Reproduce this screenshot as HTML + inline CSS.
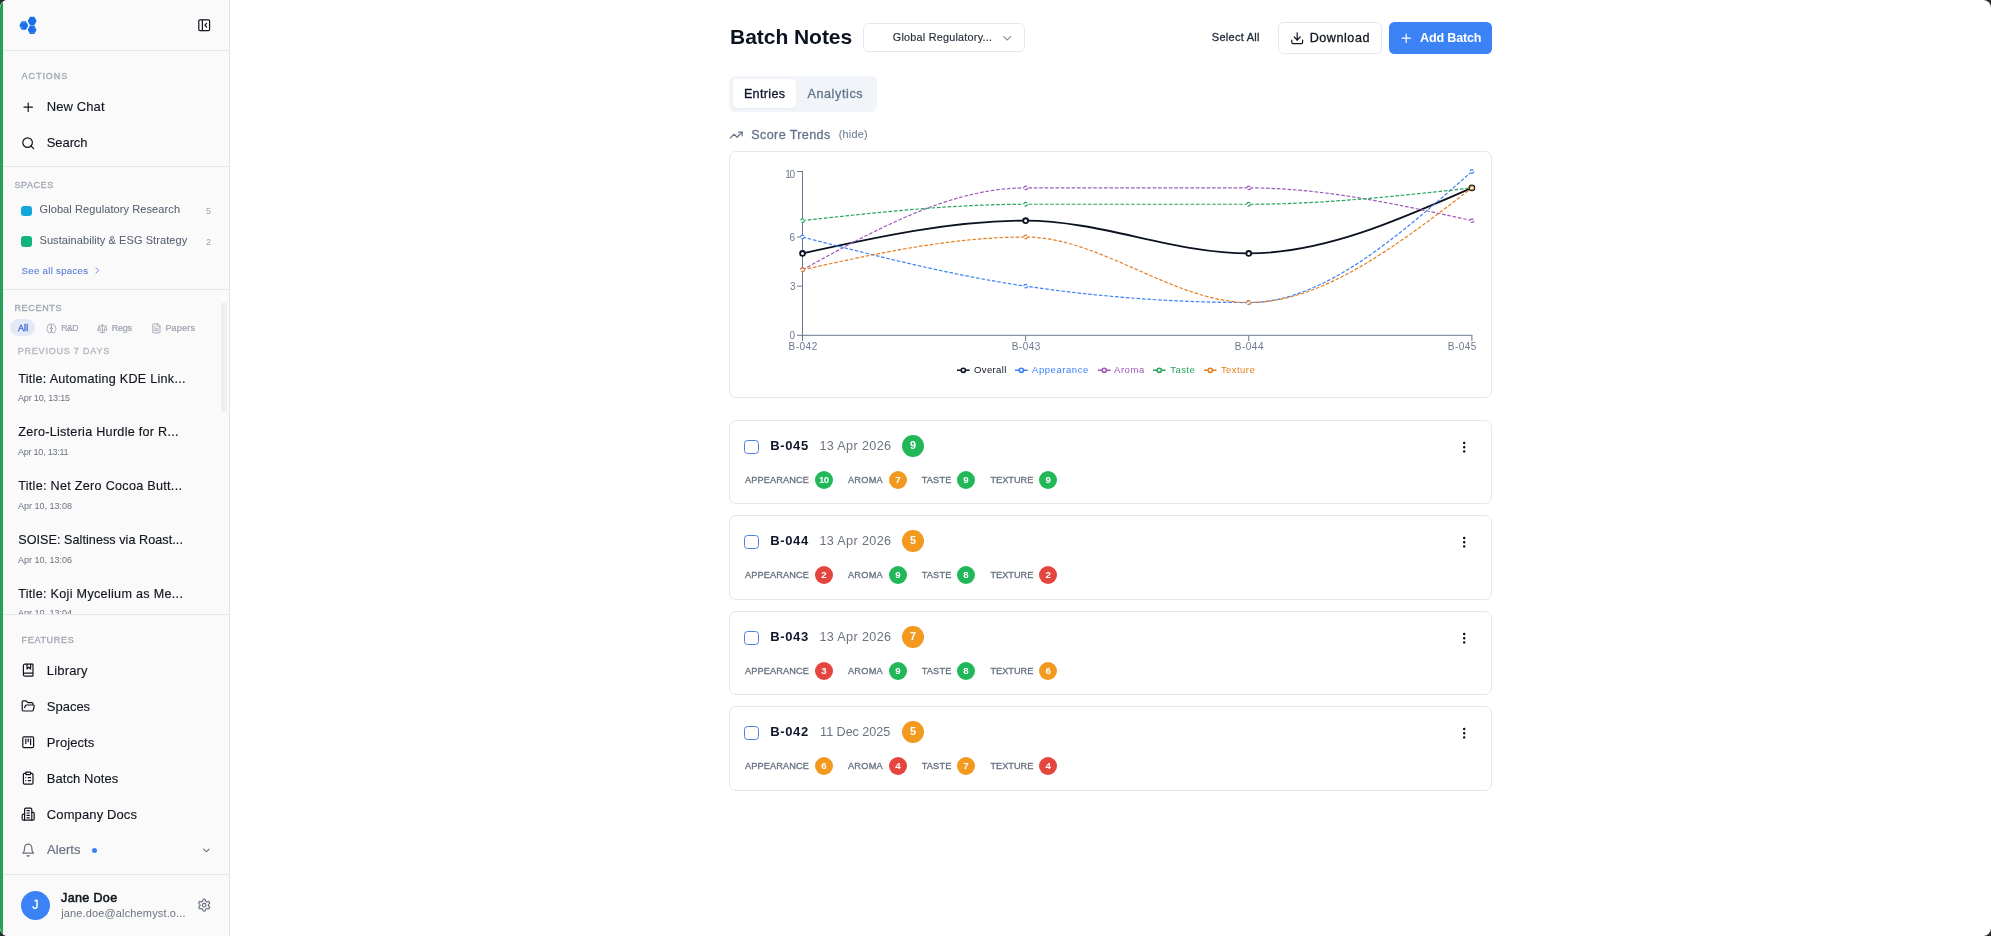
<!DOCTYPE html>
<html><head><meta charset="utf-8"><title>Batch Notes</title>
<style>
html,body{margin:0;padding:0;}
body{width:1991px;height:936px;overflow:hidden;background:#2b2b2b;font-family:"Liberation Sans",sans-serif;position:relative;}
#app{position:absolute;left:0;top:0;width:1991px;height:936px;background:#fff;border-radius:8px;overflow:hidden;will-change:transform;}
.t{position:absolute;white-space:nowrap;line-height:1;}
svg{display:block;overflow:visible;}
</style></head><body><div id="app">
<div style="position:absolute;left:0px;top:0px;width:229px;height:936px;background:#fafafa;"></div>
<div style="position:absolute;left:229px;top:0px;width:1px;height:936px;background:#e4e4e7;"></div>
<div style="position:absolute;left:0px;top:0px;width:3px;height:936px;background:#25a054;"></div>
<div style="position:absolute;left:3px;top:50px;width:226px;height:1px;background:#e5e7eb;"></div>
<div style="position:absolute;left:3px;top:166px;width:226px;height:1px;background:#e5e7eb;"></div>
<div style="position:absolute;left:3px;top:289px;width:226px;height:1px;background:#e5e7eb;"></div>
<div style="position:absolute;left:3px;top:614px;width:226px;height:1px;background:#e5e7eb;"></div>
<div style="position:absolute;left:3px;top:874px;width:226px;height:1px;background:#e5e7eb;"></div>
<svg style="position:absolute;left:0;top:0" width="60" height="50" viewBox="0 0 60 50">
<g fill="#1b6fe6" stroke="#1b6fe6" stroke-width="1.3" stroke-linejoin="round">
<polygon points="28.40,21.00 30.27,17.50 34.02,17.50 35.90,21.00 34.02,24.50 30.27,24.50"/>
<polygon points="28.40,29.75 30.27,26.25 34.02,26.25 35.90,29.75 34.02,33.25 30.27,33.25"/>
<polygon points="20.05,25.50 21.93,22.00 25.68,22.00 27.55,25.50 25.68,29.00 21.93,29.00"/>
</g>
<g stroke="#5fa2f5" stroke-width="0.7" stroke-linecap="round" fill="none">
<path d="M22.6 22.7h2.4"/><path d="M21.2 26.2l1.6 2"/>
<path d="M33.6 27.2l1.5 2.2"/><path d="M31 32.3h2.4"/>
</g></svg>
<svg style="position:absolute;left:196.9px;top:17.85px;" width="14.4" height="14.4" viewBox="0 0 24 24" fill="none" stroke="#10151f" stroke-width="2" stroke-linecap="round" stroke-linejoin="round"><rect width="18" height="18" x="3" y="3" rx="2"/><path d="M9 3v18"/><path d="m16 15-3-3 3-3"/></svg>
<div class="t" style="left:21.50px;top:72.00px;font-size:9px;color:#a3aab5;letter-spacing:0.966px;-webkit-text-stroke:0.35px #a3aab5;">ACTIONS</div>
<svg style="position:absolute;left:20.900000000000002px;top:99.8px;" width="14.4" height="14.4" viewBox="0 0 24 24" fill="none" stroke="#10151f" stroke-width="2" stroke-linecap="round" stroke-linejoin="round"><path d="M5 12h14"/><path d="M12 5v14"/></svg>
<div class="t" style="left:46.80px;top:100.00px;font-size:13px;color:#10151f;letter-spacing:0.088px;-webkit-text-stroke:0.12px #10151f;">New Chat</div>
<svg style="position:absolute;left:21.1px;top:135.9px;" width="14.4" height="14.4" viewBox="0 0 24 24" fill="none" stroke="#10151f" stroke-width="2" stroke-linecap="round" stroke-linejoin="round"><circle cx="11" cy="11" r="8"/><path d="m21 21-4.3-4.3"/></svg>
<div class="t" style="left:46.80px;top:136.00px;font-size:13px;color:#10151f;letter-spacing:-0.097px;-webkit-text-stroke:0.12px #10151f;">Search</div>
<div class="t" style="left:14.40px;top:181.00px;font-size:9px;color:#a3aab5;letter-spacing:0.591px;-webkit-text-stroke:0.35px #a3aab5;">SPACES</div>
<div style="position:absolute;left:21px;top:205.5px;width:10.5px;height:10.5px;background:#11a8d9;border-radius:3px;"></div>
<div class="t" style="left:39.50px;top:204.00px;font-size:11px;color:#566070;letter-spacing:0.093px;-webkit-text-stroke:0.05px #566070;">Global Regulatory Research</div>
<div class="t" style="left:206.00px;top:207.00px;font-size:9px;color:#9ca3af;">5</div>
<div style="position:absolute;left:21px;top:236.3px;width:10.5px;height:10.5px;background:#12b37d;border-radius:3px;"></div>
<div class="t" style="left:39.50px;top:235.00px;font-size:11px;color:#566070;letter-spacing:0.078px;-webkit-text-stroke:0.05px #566070;">Sustainability &amp; ESG Strategy</div>
<div class="t" style="left:206.00px;top:238.00px;font-size:9px;color:#9ca3af;">2</div>
<div class="t" style="left:21.50px;top:266.00px;font-size:9.7px;color:#5b7fd6;letter-spacing:0.278px;-webkit-text-stroke:0.1px #5b7fd6;">See all spaces</div>
<svg style="position:absolute;left:91.8px;top:265.20000000000005px;" width="10.8" height="10.8" viewBox="0 0 24 24" fill="none" stroke="#5b7fd6" stroke-width="2" stroke-linecap="round" stroke-linejoin="round"><path d="m9 18 6-6-6-6"/></svg>
<div class="t" style="left:14.40px;top:304.00px;font-size:9px;color:#a3aab5;letter-spacing:0.683px;-webkit-text-stroke:0.35px #a3aab5;">RECENTS</div>
<div style="position:absolute;left:10.3px;top:319.2px;width:24.6px;height:17.2px;background:#e4e9f8;border-radius:9px;"></div>
<div class="t" style="left:18.00px;top:324.00px;font-size:9px;color:#3f5fd6;letter-spacing:0.100px;-webkit-text-stroke:0.3px #3f5fd6;">All</div>
<svg style="position:absolute;left:45.800000000000004px;top:322.70000000000005px;" width="10.8" height="10.8" viewBox="0 0 24 24" fill="none" stroke="#9ca3af" stroke-width="2" stroke-linecap="round" stroke-linejoin="round"><path d="M12 5a3 3 0 1 0-5.997.125 4 4 0 0 0-2.526 5.77 4 4 0 0 0 .556 6.588A4 4 0 1 0 12 18Z"/><path d="M12 5a3 3 0 1 1 5.997.125 4 4 0 0 1 2.526 5.77 4 4 0 0 1-.556 6.588A4 4 0 1 1 12 18Z"/><path d="M15 13a4.5 4.5 0 0 1-3-4 4.5 4.5 0 0 1-3 4"/></svg>
<div class="t" style="left:61.30px;top:324.00px;font-size:8.6px;color:#9ca3af;letter-spacing:-0.477px;-webkit-text-stroke:0.2px #9ca3af;">R&amp;D</div>
<svg style="position:absolute;left:96.8px;top:322.70000000000005px;" width="10.8" height="10.8" viewBox="0 0 24 24" fill="none" stroke="#9ca3af" stroke-width="2" stroke-linecap="round" stroke-linejoin="round"><path d="m16 16 3-8 3 8c-.87.65-1.92 1-3 1s-2.13-.35-3-1Z"/><path d="m2 16 3-8 3 8c-.87.65-1.92 1-3 1s-2.13-.35-3-1Z"/><path d="M7 21h10"/><path d="M12 3v18"/><path d="M3 7h2c2 0 5-1 7-2 2 1 5 2 7 2h2"/></svg>
<div class="t" style="left:111.80px;top:324.00px;font-size:9px;color:#9ca3af;letter-spacing:-0.269px;-webkit-text-stroke:0.2px #9ca3af;">Regs</div>
<svg style="position:absolute;left:150.75px;top:322.70000000000005px;" width="10.8" height="10.8" viewBox="0 0 24 24" fill="none" stroke="#9ca3af" stroke-width="2" stroke-linecap="round" stroke-linejoin="round"><path d="M15 2H6a2 2 0 0 0-2 2v16a2 2 0 0 0 2 2h12a2 2 0 0 0 2-2V7Z"/><path d="M14 2v4a2 2 0 0 0 2 2h4"/><path d="M10 9H8"/><path d="M16 13H8"/><path d="M16 17H8"/></svg>
<div class="t" style="left:165.40px;top:324.00px;font-size:9px;color:#9ca3af;letter-spacing:0.198px;-webkit-text-stroke:0.2px #9ca3af;">Papers</div>
<div class="t" style="left:17.70px;top:347.00px;font-size:9px;color:#b3b8c0;letter-spacing:0.796px;-webkit-text-stroke:0.35px #b3b8c0;">PREVIOUS 7 DAYS</div>
<div style="position:absolute;left:3px;top:296px;width:226px;height:318px;overflow:hidden;"><div style="position:absolute;left:-3px;top:-296px;">
<div class="t" style="left:18.20px;top:373.00px;font-size:12.6px;color:#10151f;letter-spacing:0.264px;-webkit-text-stroke:0.15px #10151f;">Title: Automating KDE Link...</div>
<div class="t" style="left:18.00px;top:394.00px;font-size:9px;color:#6b7280;letter-spacing:-0.161px;">Apr 10, 13:15</div>
<div class="t" style="left:18.20px;top:426.00px;font-size:12.6px;color:#10151f;letter-spacing:0.277px;-webkit-text-stroke:0.15px #10151f;">Zero-Listeria Hurdle for R...</div>
<div class="t" style="left:18.00px;top:448.00px;font-size:9px;color:#6b7280;letter-spacing:-0.231px;">Apr 10, 13:11</div>
<div class="t" style="left:18.20px;top:480.00px;font-size:12.6px;color:#10151f;letter-spacing:0.290px;-webkit-text-stroke:0.15px #10151f;">Title: Net Zero Cocoa Butt...</div>
<div class="t" style="left:18.00px;top:502.00px;font-size:9px;color:#6b7280;letter-spacing:-0.003px;">Apr 10, 13:08</div>
<div class="t" style="left:18.20px;top:534.00px;font-size:12.6px;color:#10151f;letter-spacing:0.058px;-webkit-text-stroke:0.15px #10151f;">SOISE: Saltiness via Roast...</div>
<div class="t" style="left:18.00px;top:556.00px;font-size:9px;color:#6b7280;letter-spacing:0.005px;">Apr 10, 13:06</div>
<div class="t" style="left:18.20px;top:588.00px;font-size:12.6px;color:#10151f;letter-spacing:0.301px;-webkit-text-stroke:0.15px #10151f;">Title: Koji Mycelium as Me...</div>
<div class="t" style="left:18.00px;top:609.00px;font-size:9px;color:#6b7280;letter-spacing:0.005px;">Apr 10, 13:04</div>
</div></div>
<div style="position:absolute;left:221px;top:303px;width:6px;height:108.5px;background:#eeeff2;"></div>
<div class="t" style="left:21.50px;top:636.00px;font-size:9px;color:#a3aab5;letter-spacing:0.694px;-webkit-text-stroke:0.35px #a3aab5;">FEATURES</div>
<svg style="position:absolute;left:20.900000000000002px;top:662.9px;" width="14.4" height="14.4" viewBox="0 0 24 24" fill="none" stroke="#10151f" stroke-width="2" stroke-linecap="round" stroke-linejoin="round"><path d="M10 2v8l3-3 3 3V2"/><path d="M4 19.5v-15A2.5 2.5 0 0 1 6.5 2H19a1 1 0 0 1 1 1v18a1 1 0 0 1-1 1H6.5a1 1 0 0 1 0-5H20"/></svg>
<div class="t" style="left:46.80px;top:664.00px;font-size:13px;color:#10151f;letter-spacing:0.176px;-webkit-text-stroke:0.12px #10151f;">Library</div>
<svg style="position:absolute;left:20.900000000000002px;top:698.9px;" width="14.4" height="14.4" viewBox="0 0 24 24" fill="none" stroke="#10151f" stroke-width="2" stroke-linecap="round" stroke-linejoin="round"><path d="m6 14 1.5-2.9A2 2 0 0 1 9.24 10H20a2 2 0 0 1 1.94 2.5l-1.54 6a2 2 0 0 1-1.95 1.5H4a2 2 0 0 1-2-2V5a2 2 0 0 1 2-2h3.9a2 2 0 0 1 1.69.9l.81 1.2a2 2 0 0 0 1.67.9H18a2 2 0 0 1 2 2v2"/></svg>
<div class="t" style="left:46.80px;top:700.00px;font-size:13px;color:#10151f;letter-spacing:-0.011px;-webkit-text-stroke:0.12px #10151f;">Spaces</div>
<svg style="position:absolute;left:20.900000000000002px;top:734.9px;" width="14.4" height="14.4" viewBox="0 0 24 24" fill="none" stroke="#10151f" stroke-width="2" stroke-linecap="round" stroke-linejoin="round"><rect width="18" height="18" x="3" y="3" rx="2"/><path d="M8 7v7"/><path d="M12 7v4"/><path d="M16 7v9"/></svg>
<div class="t" style="left:46.80px;top:736.00px;font-size:13px;color:#10151f;letter-spacing:0.063px;-webkit-text-stroke:0.12px #10151f;">Projects</div>
<svg style="position:absolute;left:20.900000000000002px;top:770.9px;" width="14.4" height="14.4" viewBox="0 0 24 24" fill="none" stroke="#10151f" stroke-width="2" stroke-linecap="round" stroke-linejoin="round"><rect width="8" height="4" x="8" y="2" rx="1" ry="1"/><path d="M16 4h2a2 2 0 0 1 2 2v14a2 2 0 0 1-2 2H6a2 2 0 0 1-2-2V6a2 2 0 0 1 2-2h2"/><path d="M12 11h4"/><path d="M12 16h4"/><path d="M8 11h.01"/><path d="M8 16h.01"/></svg>
<div class="t" style="left:46.80px;top:772.00px;font-size:13px;color:#10151f;letter-spacing:0.059px;-webkit-text-stroke:0.12px #10151f;">Batch Notes</div>
<svg style="position:absolute;left:20.900000000000002px;top:806.9px;" width="14.4" height="14.4" viewBox="0 0 24 24" fill="none" stroke="#10151f" stroke-width="2" stroke-linecap="round" stroke-linejoin="round"><path d="M6 22V4a2 2 0 0 1 2-2h8a2 2 0 0 1 2 2v18Z"/><path d="M6 12H4a2 2 0 0 0-2 2v6a2 2 0 0 0 2 2h2"/><path d="M18 9h2a2 2 0 0 1 2 2v9a2 2 0 0 1-2 2h-2"/><path d="M10 6h4"/><path d="M10 10h4"/><path d="M10 14h4"/><path d="M10 18h4"/></svg>
<div class="t" style="left:46.80px;top:808.00px;font-size:13px;color:#10151f;letter-spacing:0.121px;-webkit-text-stroke:0.12px #10151f;">Company Docs</div>
<svg style="position:absolute;left:20.85px;top:843.15px;" width="14.4" height="14.4" viewBox="0 0 24 24" fill="none" stroke="#6b7280" stroke-width="2" stroke-linecap="round" stroke-linejoin="round"><path d="M6 8a6 6 0 0 1 12 0c0 7 3 9 3 9H3s3-2 3-9"/><path d="M10.3 21a1.94 1.94 0 0 0 3.4 0"/></svg>
<div class="t" style="left:47.00px;top:843.00px;font-size:13px;color:#6b7280;letter-spacing:0.054px;-webkit-text-stroke:0.2px #6b7280;">Alerts</div>
<div style="position:absolute;left:91.8px;top:847.9px;width:5.2px;height:5.2px;background:#3b82f6;border-radius:50%;"></div>
<svg style="position:absolute;left:201.2px;top:844.9px;" width="10.8" height="10.8" viewBox="0 0 24 24" fill="none" stroke="#5d6572" stroke-width="2.3" stroke-linecap="round" stroke-linejoin="round"><path d="m6 9 6 6 6-6"/></svg>
<div style="position:absolute;left:21px;top:891px;width:29px;height:29px;background:#3b82f6;border-radius:50%;"></div>
<div class="t" style="left:32.35px;top:899.00px;font-size:12.6px;color:#fff;-webkit-text-stroke:0.3px #fff;">J</div>
<div class="t" style="left:61.10px;top:892.00px;font-size:12.6px;color:#10151f;letter-spacing:0.308px;-webkit-text-stroke:0.55px #10151f;">Jane Doe</div>
<div class="t" style="left:61.17px;top:908.00px;font-size:11px;color:#6b7280;letter-spacing:0.145px;">jane.doe@alchemyst.o...</div>
<svg style="position:absolute;left:196.95000000000002px;top:898.05px;" width="14.4" height="14.4" viewBox="0 0 24 24" fill="none" stroke="#6b7280" stroke-width="2" stroke-linecap="round" stroke-linejoin="round"><path d="M12.22 2h-.44a2 2 0 0 0-2 2v.18a2 2 0 0 1-1 1.73l-.43.25a2 2 0 0 1-2 0l-.15-.08a2 2 0 0 0-2.73.73l-.22.38a2 2 0 0 0 .73 2.73l.15.1a2 2 0 0 1 1 1.72v.51a2 2 0 0 1-1 1.74l-.15.09a2 2 0 0 0-.73 2.73l.22.38a2 2 0 0 0 2.73.73l.15-.08a2 2 0 0 1 2 0l.43.25a2 2 0 0 1 1 1.73V20a2 2 0 0 0 2 2h.44a2 2 0 0 0 2-2v-.18a2 2 0 0 1 1-1.73l.43-.25a2 2 0 0 1 2 0l.15.08a2 2 0 0 0 2.73-.73l.22-.39a2 2 0 0 0-.73-2.73l-.15-.08a2 2 0 0 1-1-1.74v-.5a2 2 0 0 1 1-1.74l.15-.09a2 2 0 0 0 .73-2.73l-.22-.38a2 2 0 0 0-2.73-.73l-.15.08a2 2 0 0 1-2 0l-.43-.25a2 2 0 0 1-1-1.73V4a2 2 0 0 0-2-2z"/><circle cx="12" cy="12" r="3"/></svg>
<div class="t" style="left:730.00px;top:26.00px;font-size:21px;color:#0b1220;letter-spacing:-0.033px;font-weight:700;">Batch Notes</div>
<div style="position:absolute;left:863px;top:23px;width:162px;height:29px;box-sizing:border-box;border:1px solid #e2e8f0;border-radius:6px;background:#fff;"></div>
<div class="t" style="left:892.80px;top:32.00px;font-size:10.8px;color:#1f2937;letter-spacing:0.239px;-webkit-text-stroke:0.15px #1f2937;">Global Regulatory...</div>
<svg style="position:absolute;left:1000.1999999999999px;top:30.900000000000002px;" width="14.4" height="14.4" viewBox="0 0 24 24" fill="none" stroke="#8a909c" stroke-width="1.8" stroke-linecap="round" stroke-linejoin="round"><path d="m6 9 6 6 6-6"/></svg>
<div class="t" style="left:1211.80px;top:32.00px;font-size:11px;color:#1f2937;letter-spacing:0.273px;-webkit-text-stroke:0.3px #1f2937;">Select All</div>
<div style="position:absolute;left:1278px;top:22px;width:104px;height:32px;box-sizing:border-box;border:1px solid #e5e7eb;border-radius:5.4px;background:#fff;"></div>
<svg style="position:absolute;left:1290.1499999999999px;top:30.900000000000002px;" width="14.4" height="14.4" viewBox="0 0 24 24" fill="none" stroke="#10151f" stroke-width="2" stroke-linecap="round" stroke-linejoin="round"><path d="M21 15v4a2 2 0 0 1-2 2H5a2 2 0 0 1-2-2v-4"/><polyline points="7 10 12 15 17 10"/><line x1="12" x2="12" y1="15" y2="3"/></svg>
<div class="t" style="left:1309.70px;top:32.00px;font-size:12.6px;color:#10151f;letter-spacing:0.538px;-webkit-text-stroke:0.3px #10151f;">Download</div>
<div style="position:absolute;left:1389px;top:22px;width:103px;height:32px;background:#3b82f6;border-radius:5.4px;"></div>
<svg style="position:absolute;left:1399.1px;top:31.000000000000004px;" width="14.4" height="14.4" viewBox="0 0 24 24" fill="none" stroke="#fff" stroke-width="2" stroke-linecap="round" stroke-linejoin="round"><path d="M5 12h14"/><path d="M12 5v14"/></svg>
<div class="t" style="left:1420.00px;top:32.00px;font-size:12.6px;color:#fff;letter-spacing:-0.188px;font-weight:700;">Add Batch</div>
<div style="position:absolute;left:729px;top:76px;width:148px;height:36px;background:#f1f5f9;border-radius:6px;"></div>
<div style="position:absolute;left:733px;top:79.3px;width:63px;height:28.8px;background:#fff;border-radius:4px;box-shadow:0 1px 2px rgba(0,0,0,0.06);"></div>
<div class="t" style="left:743.90px;top:88.00px;font-size:12.6px;color:#0f172a;letter-spacing:0.331px;-webkit-text-stroke:0.3px #0f172a;">Entries</div>
<div class="t" style="left:807.40px;top:88.00px;font-size:12.6px;color:#64748b;letter-spacing:0.598px;-webkit-text-stroke:0.3px #64748b;">Analytics</div>
<svg style="position:absolute;left:729.1999999999999px;top:127.89999999999999px;" width="14.4" height="14.4" viewBox="0 0 24 24" fill="none" stroke="#64748b" stroke-width="2" stroke-linecap="round" stroke-linejoin="round"><polyline points="22 7 13.5 15.5 8.5 10.5 2 17"/><polyline points="16 7 22 7 22 13"/></svg>
<div class="t" style="left:751.30px;top:129.00px;font-size:12.6px;color:#64748b;letter-spacing:0.370px;-webkit-text-stroke:0.3px #64748b;">Score Trends</div>
<div class="t" style="left:838.70px;top:129.00px;font-size:10.8px;color:#64748b;letter-spacing:0.257px;">(hide)</div>
<div style="position:absolute;left:729px;top:151px;width:763px;height:247px;box-sizing:border-box;border:1px solid #e3e7ee;border-radius:7px;background:#fff;"></div>
<svg style="position:absolute;left:0;top:0" width="1991" height="936" viewBox="0 0 1991 936" fill="none"><g stroke="#6a788d" stroke-width="1" fill="none"><line x1="802.5" y1="171.0" x2="802.5" y2="335.3"/><line x1="802" y1="335.3" x2="1472.39" y2="335.3"/><line x1="797" y1="335.30" x2="802.5" y2="335.30"/><line x1="797" y1="286.16" x2="802.5" y2="286.16"/><line x1="797" y1="237.02" x2="802.5" y2="237.02"/><line x1="797" y1="171.50" x2="802.5" y2="171.50"/><line x1="802.50" y1="335.3" x2="802.50" y2="341.0"/><line x1="1025.63" y1="335.3" x2="1025.63" y2="341.0"/><line x1="1248.76" y1="335.3" x2="1248.76" y2="341.0"/><line x1="1471.89" y1="335.3" x2="1471.89" y2="341.0"/></g><path d="M802.500,253.400C876.877,237.020,951.253,220.640,1025.630,220.640C1100.007,220.640,1174.383,253.400,1248.760,253.400C1323.137,253.400,1397.513,220.640,1471.890,187.880" stroke="#0b1220" stroke-width="1.8"/><circle cx="802.50" cy="253.40" r="2.4" stroke="#0b1220" stroke-width="1.8" fill="#fff"/><circle cx="1025.63" cy="220.64" r="2.4" stroke="#0b1220" stroke-width="1.8" fill="#fff"/><circle cx="1248.76" cy="253.40" r="2.4" stroke="#0b1220" stroke-width="1.8" fill="#fff"/><circle cx="1471.89" cy="187.88" r="2.4" stroke="#0b1220" stroke-width="1.8" fill="#fff"/><path d="M802.500,237.020C876.877,256.130,951.253,275.240,1025.630,286.160C1100.007,297.080,1174.383,302.540,1248.760,302.540C1323.137,302.540,1397.513,237.020,1471.890,171.500" stroke="#3b82f6" stroke-width="1.2" stroke-dasharray="3.6 1.8"/><circle cx="802.50" cy="237.02" r="1.8" stroke="#3b82f6" stroke-width="1.3" stroke-dasharray="3.6 1.8" fill="#fff"/><circle cx="1025.63" cy="286.16" r="1.8" stroke="#3b82f6" stroke-width="1.3" stroke-dasharray="3.6 1.8" fill="#fff"/><circle cx="1248.76" cy="302.54" r="1.8" stroke="#3b82f6" stroke-width="1.3" stroke-dasharray="3.6 1.8" fill="#fff"/><circle cx="1471.89" cy="171.50" r="1.8" stroke="#3b82f6" stroke-width="1.3" stroke-dasharray="3.6 1.8" fill="#fff"/><path d="M802.500,269.780C876.877,228.830,951.253,187.880,1025.630,187.880C1100.007,187.880,1174.383,187.880,1248.760,187.880C1323.137,187.880,1397.513,204.260,1471.890,220.640" stroke="#9b59b6" stroke-width="1.2" stroke-dasharray="3.6 1.8"/><circle cx="802.50" cy="269.78" r="1.8" stroke="#9b59b6" stroke-width="1.3" stroke-dasharray="3.6 1.8" fill="#fff"/><circle cx="1025.63" cy="187.88" r="1.8" stroke="#9b59b6" stroke-width="1.3" stroke-dasharray="3.6 1.8" fill="#fff"/><circle cx="1248.76" cy="187.88" r="1.8" stroke="#9b59b6" stroke-width="1.3" stroke-dasharray="3.6 1.8" fill="#fff"/><circle cx="1471.89" cy="220.64" r="1.8" stroke="#9b59b6" stroke-width="1.3" stroke-dasharray="3.6 1.8" fill="#fff"/><path d="M802.500,220.640C876.877,212.450,951.253,204.260,1025.630,204.260C1100.007,204.260,1174.383,204.260,1248.760,204.260C1323.137,204.260,1397.513,196.070,1471.890,187.880" stroke="#27a35f" stroke-width="1.2" stroke-dasharray="3.6 1.8"/><circle cx="802.50" cy="220.64" r="1.8" stroke="#27a35f" stroke-width="1.3" stroke-dasharray="3.6 1.8" fill="#fff"/><circle cx="1025.63" cy="204.26" r="1.8" stroke="#27a35f" stroke-width="1.3" stroke-dasharray="3.6 1.8" fill="#fff"/><circle cx="1248.76" cy="204.26" r="1.8" stroke="#27a35f" stroke-width="1.3" stroke-dasharray="3.6 1.8" fill="#fff"/><circle cx="1471.89" cy="187.88" r="1.8" stroke="#27a35f" stroke-width="1.3" stroke-dasharray="3.6 1.8" fill="#fff"/><path d="M802.500,269.780C876.877,253.400,951.253,237.020,1025.630,237.020C1100.007,237.020,1174.383,302.540,1248.760,302.540C1323.137,302.540,1397.513,245.210,1471.890,187.880" stroke="#e67e22" stroke-width="1.2" stroke-dasharray="3.6 1.8"/><circle cx="802.50" cy="269.78" r="1.8" stroke="#e67e22" stroke-width="1.3" stroke-dasharray="3.6 1.8" fill="#fff"/><circle cx="1025.63" cy="237.02" r="1.8" stroke="#e67e22" stroke-width="1.3" stroke-dasharray="3.6 1.8" fill="#fff"/><circle cx="1248.76" cy="302.54" r="1.8" stroke="#e67e22" stroke-width="1.3" stroke-dasharray="3.6 1.8" fill="#fff"/><circle cx="1471.89" cy="187.88" r="1.8" stroke="#e67e22" stroke-width="1.3" stroke-dasharray="3.6 1.8" fill="#fff"/></svg>
<div class="t" style="left:789.60px;top:331.00px;font-size:10px;color:#6a788d;">0</div>
<div class="t" style="left:789.90px;top:282.00px;font-size:10px;color:#6a788d;">3</div>
<div class="t" style="left:789.60px;top:233.00px;font-size:10px;color:#6a788d;">6</div>
<div class="t" style="left:785.20px;top:170.00px;font-size:10px;color:#6a788d;letter-spacing:-1.220px;">10</div>
<div class="t" style="left:788.50px;top:342.00px;font-size:10px;color:#6a788d;letter-spacing:0.505px;">B-042</div>
<div class="t" style="left:1011.63px;top:342.00px;font-size:10px;color:#6a788d;letter-spacing:0.505px;">B-043</div>
<div class="t" style="left:1234.76px;top:342.00px;font-size:10px;color:#6a788d;letter-spacing:0.505px;">B-044</div>
<div class="t" style="left:1447.85px;top:342.00px;font-size:10px;color:#6a788d;letter-spacing:0.418px;">B-045</div>
<svg style="position:absolute;left:957.00px;top:363.50px" width="12.6" height="12.6" viewBox="0 0 32 32"><path stroke-width="4" fill="none" stroke="#0b1220" d="M0,16h10.666666666666666A5.333333333333333,5.333333333333333,0,1,1,21.333333333333332,16H32M21.333333333333332,16A5.333333333333333,5.333333333333333,0,1,1,10.666666666666666,16"/></svg>
<div class="t" style="left:974.10px;top:365.00px;font-size:9.5px;color:#0b1220;letter-spacing:0.351px;">Overall</div>
<svg style="position:absolute;left:1015.10px;top:363.50px" width="12.6" height="12.6" viewBox="0 0 32 32"><path stroke-width="4" fill="none" stroke="#3b82f6" d="M0,16h10.666666666666666A5.333333333333333,5.333333333333333,0,1,1,21.333333333333332,16H32M21.333333333333332,16A5.333333333333333,5.333333333333333,0,1,1,10.666666666666666,16"/></svg>
<div class="t" style="left:1032.00px;top:365.00px;font-size:9.5px;color:#3b82f6;letter-spacing:0.563px;">Appearance</div>
<svg style="position:absolute;left:1097.70px;top:363.50px" width="12.6" height="12.6" viewBox="0 0 32 32"><path stroke-width="4" fill="none" stroke="#9b59b6" d="M0,16h10.666666666666666A5.333333333333333,5.333333333333333,0,1,1,21.333333333333332,16H32M21.333333333333332,16A5.333333333333333,5.333333333333333,0,1,1,10.666666666666666,16"/></svg>
<div class="t" style="left:1114.00px;top:365.00px;font-size:9.5px;color:#9b59b6;letter-spacing:0.553px;">Aroma</div>
<svg style="position:absolute;left:1152.90px;top:363.50px" width="12.6" height="12.6" viewBox="0 0 32 32"><path stroke-width="4" fill="none" stroke="#27a35f" d="M0,16h10.666666666666666A5.333333333333333,5.333333333333333,0,1,1,21.333333333333332,16H32M21.333333333333332,16A5.333333333333333,5.333333333333333,0,1,1,10.666666666666666,16"/></svg>
<div class="t" style="left:1170.30px;top:365.00px;font-size:9.5px;color:#27a35f;letter-spacing:0.424px;">Taste</div>
<svg style="position:absolute;left:1203.70px;top:363.50px" width="12.6" height="12.6" viewBox="0 0 32 32"><path stroke-width="4" fill="none" stroke="#e67e22" d="M0,16h10.666666666666666A5.333333333333333,5.333333333333333,0,1,1,21.333333333333332,16H32M21.333333333333332,16A5.333333333333333,5.333333333333333,0,1,1,10.666666666666666,16"/></svg>
<div class="t" style="left:1220.90px;top:365.00px;font-size:9.5px;color:#e67e22;letter-spacing:0.442px;">Texture</div>
<div style="position:absolute;left:729px;top:420px;width:763px;height:84px;box-sizing:border-box;border:1px solid #e3e7ee;border-radius:7px;background:#fff;"></div>
<div style="position:absolute;left:744.2px;top:440px;width:14.4px;height:14.4px;box-sizing:border-box;border:1px solid #4f7fdb;border-radius:3.6px;background:#fff;"></div>
<div class="t" style="left:770.30px;top:439.00px;font-size:13px;color:#0f172a;letter-spacing:0.622px;font-weight:700;">B-045</div>
<div class="t" style="left:819.40px;top:440.00px;font-size:12.6px;color:#6b7280;letter-spacing:0.374px;">13 Apr 2026</div>
<div style="position:absolute;left:901.9px;top:435.1px;width:22px;height:22px;background:#22b859;border-radius:50%;"></div>
<div class="t" style="left:909.90px;top:440.00px;font-size:10.8px;color:#fff;font-weight:700;">9</div>
<svg style="position:absolute;left:1457.0px;top:439.90000000000003px;" width="14.4" height="14.4" viewBox="0 0 24 24" fill="none" stroke="#0a0a0a" stroke-width="2" stroke-linecap="round" stroke-linejoin="round"><circle cx="12" cy="12" r="1"/><circle cx="12" cy="5" r="1"/><circle cx="12" cy="19" r="1"/></svg>
<div class="t" style="left:744.90px;top:476.00px;font-size:9.2px;color:#667080;letter-spacing:0.145px;-webkit-text-stroke:0.3px #667080;">APPEARANCE</div>
<div style="position:absolute;left:815px;top:471px;width:18px;height:18px;background:#22b859;border-radius:50%;"></div>
<div class="t" style="left:818.96px;top:475.00px;font-size:9.7px;color:#fff;letter-spacing:-0.700px;font-weight:700;">10</div>
<div class="t" style="left:847.90px;top:476.00px;font-size:9.2px;color:#667080;letter-spacing:0.291px;-webkit-text-stroke:0.3px #667080;">AROMA</div>
<div style="position:absolute;left:889px;top:471px;width:18px;height:18px;background:#f29a1f;border-radius:50%;"></div>
<div class="t" style="left:895.30px;top:475.00px;font-size:9.7px;color:#fff;font-weight:700;">7</div>
<div class="t" style="left:921.70px;top:476.00px;font-size:9.2px;color:#667080;letter-spacing:0.185px;-webkit-text-stroke:0.3px #667080;">TASTE</div>
<div style="position:absolute;left:957px;top:471px;width:18px;height:18px;background:#22b859;border-radius:50%;"></div>
<div class="t" style="left:963.30px;top:475.00px;font-size:9.7px;color:#fff;font-weight:700;">9</div>
<div class="t" style="left:990.40px;top:476.00px;font-size:9.2px;color:#667080;letter-spacing:0.011px;-webkit-text-stroke:0.3px #667080;">TEXTURE</div>
<div style="position:absolute;left:1039.1px;top:471px;width:18px;height:18px;background:#22b859;border-radius:50%;"></div>
<div class="t" style="left:1045.40px;top:475.00px;font-size:9.7px;color:#fff;font-weight:700;">9</div>
<div style="position:absolute;left:729px;top:515px;width:763px;height:85px;box-sizing:border-box;border:1px solid #e3e7ee;border-radius:7px;background:#fff;"></div>
<div style="position:absolute;left:744.2px;top:535px;width:14.4px;height:14.4px;box-sizing:border-box;border:1px solid #4f7fdb;border-radius:3.6px;background:#fff;"></div>
<div class="t" style="left:770.30px;top:534.00px;font-size:13px;color:#0f172a;letter-spacing:0.622px;font-weight:700;">B-044</div>
<div class="t" style="left:819.40px;top:535.00px;font-size:12.6px;color:#6b7280;letter-spacing:0.374px;">13 Apr 2026</div>
<div style="position:absolute;left:901.9px;top:530.1px;width:22px;height:22px;background:#f29a1f;border-radius:50%;"></div>
<div class="t" style="left:909.90px;top:535.00px;font-size:10.8px;color:#fff;font-weight:700;">5</div>
<svg style="position:absolute;left:1457.0px;top:534.9px;" width="14.4" height="14.4" viewBox="0 0 24 24" fill="none" stroke="#0a0a0a" stroke-width="2" stroke-linecap="round" stroke-linejoin="round"><circle cx="12" cy="12" r="1"/><circle cx="12" cy="5" r="1"/><circle cx="12" cy="19" r="1"/></svg>
<div class="t" style="left:744.90px;top:571.00px;font-size:9.2px;color:#667080;letter-spacing:0.145px;-webkit-text-stroke:0.3px #667080;">APPEARANCE</div>
<div style="position:absolute;left:815px;top:566px;width:18px;height:18px;background:#e5453f;border-radius:50%;"></div>
<div class="t" style="left:821.30px;top:570.00px;font-size:9.7px;color:#fff;font-weight:700;">2</div>
<div class="t" style="left:847.90px;top:571.00px;font-size:9.2px;color:#667080;letter-spacing:0.291px;-webkit-text-stroke:0.3px #667080;">AROMA</div>
<div style="position:absolute;left:889px;top:566px;width:18px;height:18px;background:#22b859;border-radius:50%;"></div>
<div class="t" style="left:895.30px;top:570.00px;font-size:9.7px;color:#fff;font-weight:700;">9</div>
<div class="t" style="left:921.70px;top:571.00px;font-size:9.2px;color:#667080;letter-spacing:0.185px;-webkit-text-stroke:0.3px #667080;">TASTE</div>
<div style="position:absolute;left:957px;top:566px;width:18px;height:18px;background:#22b859;border-radius:50%;"></div>
<div class="t" style="left:963.30px;top:570.00px;font-size:9.7px;color:#fff;font-weight:700;">8</div>
<div class="t" style="left:990.40px;top:571.00px;font-size:9.2px;color:#667080;letter-spacing:0.011px;-webkit-text-stroke:0.3px #667080;">TEXTURE</div>
<div style="position:absolute;left:1039.1px;top:566px;width:18px;height:18px;background:#e5453f;border-radius:50%;"></div>
<div class="t" style="left:1045.40px;top:570.00px;font-size:9.7px;color:#fff;font-weight:700;">2</div>
<div style="position:absolute;left:729px;top:611px;width:763px;height:84px;box-sizing:border-box;border:1px solid #e3e7ee;border-radius:7px;background:#fff;"></div>
<div style="position:absolute;left:744.2px;top:631px;width:14.4px;height:14.4px;box-sizing:border-box;border:1px solid #4f7fdb;border-radius:3.6px;background:#fff;"></div>
<div class="t" style="left:770.30px;top:630.00px;font-size:13px;color:#0f172a;letter-spacing:0.622px;font-weight:700;">B-043</div>
<div class="t" style="left:819.40px;top:631.00px;font-size:12.6px;color:#6b7280;letter-spacing:0.374px;">13 Apr 2026</div>
<div style="position:absolute;left:901.9px;top:626.1px;width:22px;height:22px;background:#f29a1f;border-radius:50%;"></div>
<div class="t" style="left:909.90px;top:631.00px;font-size:10.8px;color:#fff;font-weight:700;">7</div>
<svg style="position:absolute;left:1457.0px;top:630.9px;" width="14.4" height="14.4" viewBox="0 0 24 24" fill="none" stroke="#0a0a0a" stroke-width="2" stroke-linecap="round" stroke-linejoin="round"><circle cx="12" cy="12" r="1"/><circle cx="12" cy="5" r="1"/><circle cx="12" cy="19" r="1"/></svg>
<div class="t" style="left:744.90px;top:667.00px;font-size:9.2px;color:#667080;letter-spacing:0.145px;-webkit-text-stroke:0.3px #667080;">APPEARANCE</div>
<div style="position:absolute;left:815px;top:662px;width:18px;height:18px;background:#e5453f;border-radius:50%;"></div>
<div class="t" style="left:821.30px;top:666.00px;font-size:9.7px;color:#fff;font-weight:700;">3</div>
<div class="t" style="left:847.90px;top:667.00px;font-size:9.2px;color:#667080;letter-spacing:0.291px;-webkit-text-stroke:0.3px #667080;">AROMA</div>
<div style="position:absolute;left:889px;top:662px;width:18px;height:18px;background:#22b859;border-radius:50%;"></div>
<div class="t" style="left:895.30px;top:666.00px;font-size:9.7px;color:#fff;font-weight:700;">9</div>
<div class="t" style="left:921.70px;top:667.00px;font-size:9.2px;color:#667080;letter-spacing:0.185px;-webkit-text-stroke:0.3px #667080;">TASTE</div>
<div style="position:absolute;left:957px;top:662px;width:18px;height:18px;background:#22b859;border-radius:50%;"></div>
<div class="t" style="left:963.30px;top:666.00px;font-size:9.7px;color:#fff;font-weight:700;">8</div>
<div class="t" style="left:990.40px;top:667.00px;font-size:9.2px;color:#667080;letter-spacing:0.011px;-webkit-text-stroke:0.3px #667080;">TEXTURE</div>
<div style="position:absolute;left:1039.1px;top:662px;width:18px;height:18px;background:#f29a1f;border-radius:50%;"></div>
<div class="t" style="left:1045.40px;top:666.00px;font-size:9.7px;color:#fff;font-weight:700;">6</div>
<div style="position:absolute;left:729px;top:706px;width:763px;height:85px;box-sizing:border-box;border:1px solid #e3e7ee;border-radius:7px;background:#fff;"></div>
<div style="position:absolute;left:744.2px;top:726px;width:14.4px;height:14.4px;box-sizing:border-box;border:1px solid #4f7fdb;border-radius:3.6px;background:#fff;"></div>
<div class="t" style="left:770.30px;top:725.00px;font-size:13px;color:#0f172a;letter-spacing:0.622px;font-weight:700;">B-042</div>
<div class="t" style="left:820.10px;top:726.00px;font-size:12.6px;color:#6b7280;letter-spacing:-0.032px;">11 Dec 2025</div>
<div style="position:absolute;left:901.9px;top:721.1px;width:22px;height:22px;background:#f29a1f;border-radius:50%;"></div>
<div class="t" style="left:909.90px;top:726.00px;font-size:10.8px;color:#fff;font-weight:700;">5</div>
<svg style="position:absolute;left:1457.0px;top:725.9px;" width="14.4" height="14.4" viewBox="0 0 24 24" fill="none" stroke="#0a0a0a" stroke-width="2" stroke-linecap="round" stroke-linejoin="round"><circle cx="12" cy="12" r="1"/><circle cx="12" cy="5" r="1"/><circle cx="12" cy="19" r="1"/></svg>
<div class="t" style="left:744.90px;top:762.00px;font-size:9.2px;color:#667080;letter-spacing:0.145px;-webkit-text-stroke:0.3px #667080;">APPEARANCE</div>
<div style="position:absolute;left:815px;top:757px;width:18px;height:18px;background:#f29a1f;border-radius:50%;"></div>
<div class="t" style="left:821.30px;top:761.00px;font-size:9.7px;color:#fff;font-weight:700;">6</div>
<div class="t" style="left:847.90px;top:762.00px;font-size:9.2px;color:#667080;letter-spacing:0.291px;-webkit-text-stroke:0.3px #667080;">AROMA</div>
<div style="position:absolute;left:889px;top:757px;width:18px;height:18px;background:#e5453f;border-radius:50%;"></div>
<div class="t" style="left:895.30px;top:761.00px;font-size:9.7px;color:#fff;font-weight:700;">4</div>
<div class="t" style="left:921.70px;top:762.00px;font-size:9.2px;color:#667080;letter-spacing:0.185px;-webkit-text-stroke:0.3px #667080;">TASTE</div>
<div style="position:absolute;left:957px;top:757px;width:18px;height:18px;background:#f29a1f;border-radius:50%;"></div>
<div class="t" style="left:963.30px;top:761.00px;font-size:9.7px;color:#fff;font-weight:700;">7</div>
<div class="t" style="left:990.40px;top:762.00px;font-size:9.2px;color:#667080;letter-spacing:0.011px;-webkit-text-stroke:0.3px #667080;">TEXTURE</div>
<div style="position:absolute;left:1039.1px;top:757px;width:18px;height:18px;background:#e5453f;border-radius:50%;"></div>
<div class="t" style="left:1045.40px;top:761.00px;font-size:9.7px;color:#fff;font-weight:700;">4</div>
</div></body></html>
